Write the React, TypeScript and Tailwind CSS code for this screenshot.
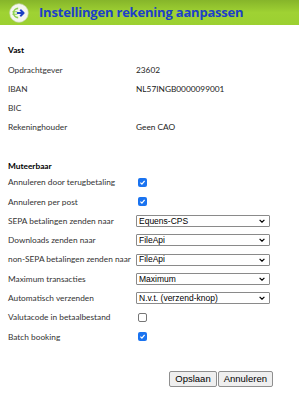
import React from 'react'

const Check: React.FC<{ checked: boolean }> = ({ checked }) =>
  checked ? (
    <span className="flex h-[9px] w-[9px] items-center justify-center rounded-[2px] bg-[#1a73f0]">
      <svg viewBox="0 0 10 10" className="h-[7px] w-[7px]">
        <path d="M2 5.2 L4.2 7.3 L8 2.8" fill="none" stroke="white" strokeWidth="1.8" />
      </svg>
    </span>
  ) : (
    <span className="block h-[9px] w-[9px] rounded-[2px] border border-[#767676] bg-white" />
  )

const Select: React.FC<{ value: string }> = ({ value }) => (
  <div className="flex h-[12px] w-[134px] items-center justify-between rounded-[1px] border border-[#8a8a8a] bg-white pl-[2px] pr-[4px] font-['Liberation_Sans',sans-serif] text-[8.5px] leading-none text-black">
    <span>{value}</span>
    <svg viewBox="0 0 10 6" className="h-[4px] w-[6px]">
      <path d="M1 1 L5 5 L9 1" fill="none" stroke="black" strokeWidth="2" />
    </svg>
  </div>
)

type Row = { label: string; kind: 'check' | 'select'; value: string | boolean }

const vast: [string, string][] = [
  ['Opdrachtgever', '23602'],
  ['IBAN', 'NL57INGB0000099001'],
  ['BIC', ''],
  ['Rekeninghouder', 'Geen CAO'],
]

const muteerbaar: Row[] = [
  { label: 'Annuleren door terugbetaling', kind: 'check', value: true },
  { label: 'Annuleren per post', kind: 'check', value: true },
  { label: 'SEPA betalingen zenden naar', kind: 'select', value: 'Equens-CPS' },
  { label: 'Downloads zenden naar', kind: 'select', value: 'FileApi' },
  { label: 'non-SEPA betalingen zenden naar', kind: 'select', value: 'FileApi' },
  { label: 'Maximum transacties', kind: 'select', value: 'Maximum' },
  { label: 'Automatisch verzenden', kind: 'select', value: 'N.v.t. (verzend-knop)' },
  { label: 'Valutacode in betaalbestand', kind: 'check', value: false },
  { label: 'Batch booking', kind: 'check', value: true },
]

export default function App() {
  return (
    <div className="h-[400px] w-[299px] bg-white font-['Lato',sans-serif] text-[8.3px] text-[#333]">
      <div className="flex h-[25px] items-center gap-[10px] bg-gradient-to-b from-[#86b52a] via-[#9fd233] to-[#9cd031] pl-[9px]">
        <svg viewBox="0 0 24 24" className="h-[20px] w-[20px]">
          <circle cx="12" cy="12" r="11.2" fill="#f4f6ef" stroke="#c9d7b0" strokeWidth="0.8" />
          <path d="M11 6.5 A5.5 5.5 0 1 0 11 17.5" fill="none" stroke="#8ed150" strokeWidth="2" />
          <path d="M4 10.5 H10 M4 13.5 H10" stroke="#8ed150" strokeWidth="1.4" />
          <path d="M9.5 12 H17 M13.5 8.2 L17.5 12 L13.5 15.8" fill="none" stroke="#1b3fc4" strokeWidth="2.4" strokeLinejoin="round" />
        </svg>
        <span className="font-['Open_Sans',sans-serif] text-[13px] font-bold tracking-[-0.2px] text-[#1c3fc8]">
          Instellingen rekening aanpassen
        </span>
      </div>

      <div className="px-[8px] pt-[19px]">
        <div className="mb-[4px] font-bold text-black">Vast</div>
        <div className="grid grid-cols-[128px_1fr]">
          {vast.map(([label, value]) => (
            <React.Fragment key={label}>
              <div className="flex h-[19px] items-center">{label}</div>
              <div className="flex h-[19px] items-center text-[#222]">{value}</div>
            </React.Fragment>
          ))}
        </div>

        <div className="mt-[24px] font-bold text-black">Muteerbaar</div>
        <div className="grid grid-cols-[128px_1fr]">
          {muteerbaar.map((r) => (
            <React.Fragment key={r.label}>
              <div className="flex h-[19.3px] items-center whitespace-nowrap">{r.label}</div>
              <div className="flex h-[19.3px] items-center">
                {r.kind === 'check' ? (
                  <span className="pl-[2px]">
                    <Check checked={r.value as boolean} />
                  </span>
                ) : (
                  <Select value={r.value as string} />
                )}
              </div>
            </React.Fragment>
          ))}
        </div>

        <div className="mt-[24px] flex justify-end gap-[1px] pr-[18px] font-['Liberation_Sans',sans-serif] text-[9.5px] text-black">
          <button className="h-[16px] rounded-[2px] border border-[#8f8f8f] bg-[#efefef] px-[5px] leading-none">
            Opslaan
          </button>
          <button className="h-[16px] rounded-[2px] border border-[#8f8f8f] bg-[#efefef] px-[5px] leading-none">
            Annuleren
          </button>
        </div>
      </div>
    </div>
  )
}
